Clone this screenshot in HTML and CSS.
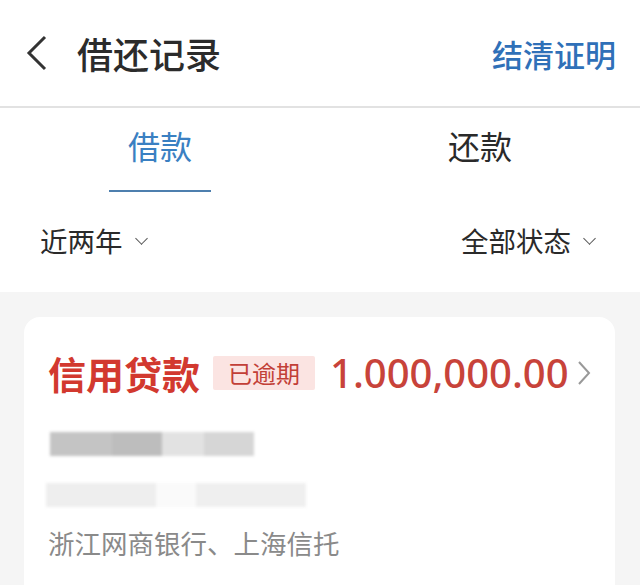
FILE: index.html
```html
<!DOCTYPE html>
<html lang="zh-CN">
<head>
    <meta charset="UTF-8">
    <meta name="viewport" content="width=device-width, initial-scale=1.0">
    <title>借还记录</title>
    <link rel="stylesheet" href="styles.css">
</head>
<body>
    <div class="header">
        <div class="header-left">
            <svg class="back" width="22" height="36" viewBox="0 0 22 36">
                <polyline points="19,2 3,18 19,34" fill="none" stroke="#333" stroke-width="3" />
            </svg>
            <div class="page-title">借还记录</div>
        </div>
        <div class="header-link">结清证明</div>
    </div>

    <div class="tabs">
        <div class="tab active">
            <span>借款</span>
            <div class="tab-line"></div>
        </div>
        <div class="tab">
            <span>还款</span>
        </div>
    </div>

    <div class="filters">
        <div class="filter">近两年 <span class="caret"></span></div>
        <div class="filter">全部状态 <span class="caret"></span></div>
    </div>

    <div class="list">
        <div class="card">
            <div class="card-top">
                <div class="loan-name">信用贷款</div>
                <div class="badge">已逾期</div>
                <div class="amount">1.000,000.00</div>
                <svg class="arrow" width="14" height="26" viewBox="0 0 14 26">
                    <polyline points="2,2 12,13 2,24" fill="none" stroke="#999" stroke-width="2" />
                </svg>
            </div>
            <!-- infos masquées -->
            <div class="blur-row">
                <div class="blk" style="width:62px;background:#c4c4c4"></div>
                <div class="blk" style="width:50px;background:#bdbdbd"></div>
                <div class="blk" style="width:42px;background:#e2e2e2"></div>
                <div class="blk" style="width:50px;background:#d6d6d6"></div>
            </div>
            <div class="blur-row light">
                <div class="blk" style="width:110px;background:#eeeeee"></div>
                <div class="blk" style="width:40px;background:#fafafa"></div>
                <div class="blk" style="width:110px;background:#efefef"></div>
            </div>
            <div class="lender">浙江网商银行、上海信托</div>
        </div>
    </div>
</body>
</html>
```

FILE: styles.css
```css
body {
    font-family: "Noto Sans CJK SC", "Noto Sans", sans-serif;
    margin: 0;
    background-color: #f5f5f5;
    color: #222;
}

.header {
    height: 106px;
    display: flex;
    align-items: center;
    justify-content: space-between;
    padding: 0 24px 0 26px;
    background-color: #fff;
    border-bottom: 2px solid #e2e2e2;
}

.header-left {
    display: flex;
    align-items: center;
    gap: 29px;
}

.page-title {
    font-size: 36px;
    font-weight: 500;
    color: #2b2b2b;
}

.header-link {
    font-size: 31px;
    font-weight: 500;
    color: #2f70b8;
}

.tabs {
    display: flex;
    height: 84px;
    background-color: #fff;
}

.tab {
    flex: 1;
    display: flex;
    flex-direction: column;
    align-items: center;
    justify-content: flex-end;
    font-size: 32px;
    color: #2a2a2a;
}

.tab span {
    margin-bottom: 22px;
}

.tab.active {
    color: #3a80c2;
}

.tab-line {
    width: 102px;
    height: 2px;
    background-color: #4d7fae;
}

.tab:not(.active) span {
    margin-bottom: 24px;
}

.filters {
    height: 96px;
    display: flex;
    align-items: center;
    justify-content: space-between;
    padding: 0 46px 4px 40px;
    background-color: #fff;
}

.filter {
    font-size: 27.5px;
    color: #2a2a2a;
    display: flex;
    align-items: center;
}

.caret {
    width: 8px;
    height: 8px;
    border-right: 1.5px solid #555;
    border-bottom: 1.5px solid #555;
    transform: rotate(45deg);
    margin-left: 14px;
    margin-top: -4px;
}

.list {
    padding: 25px 25px 0 24px;
}

.card {
    background-color: #fff;
    border-radius: 16px;
    padding: 28px 10px 40px 24px;
}

.card-top {
    display: flex;
    align-items: center;
    white-space: nowrap;
}

.card-top > * {
    flex-shrink: 0;
}

.loan-name {
    font-size: 38px;
    font-weight: 700;
    color: #d2392f;
}

.badge {
    margin-left: 13px;
    background-color: #fbe4e2;
    color: #c23f37;
    font-size: 24px;
    padding: 0 15px;
    height: 34px;
    line-height: 34px;
    border-radius: 2px;
}

.amount {
    margin-left: 15px;
    font-size: 40px;
    font-weight: 500;
    color: #c8433a;
    font-family: "Noto Sans", sans-serif;
}

.arrow {
    margin-left: 8px;
}

.blur-row {
    display: flex;
    height: 24px;
    margin-top: 32px;
    margin-left: 2px;
    filter: blur(1.5px);
}

.blur-row.light {
    margin-top: 27px;
    margin-left: -2px;
}

.blk {
    height: 100%;
}

.lender {
    margin-top: 16px;
    font-size: 26.5px;
    color: #8a8a8a;
    white-space: nowrap;
}
```
